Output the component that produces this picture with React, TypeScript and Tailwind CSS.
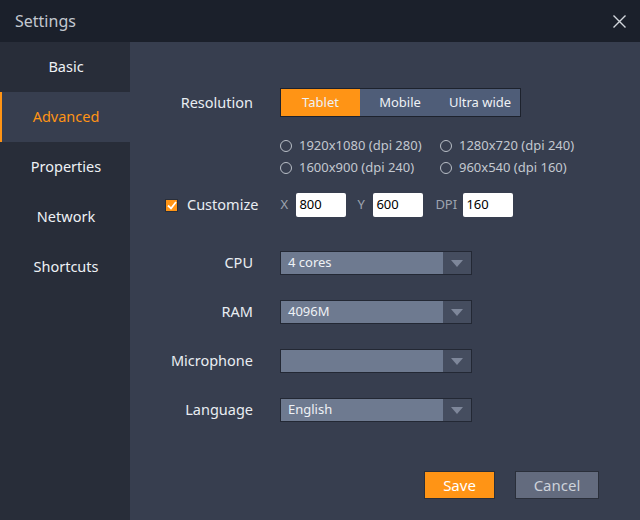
import { useState } from "react";

const tabs = ["Basic", "Advanced", "Properties", "Network", "Shortcuts"];
const modes = ["Tablet", "Mobile", "Ultra wide"];
const presets = [
  "1920x1080 (dpi 280)",
  "1280x720 (dpi 240)",
  "1600x900 (dpi 240)",
  "960x540 (dpi 160)",
];

function Select({ value }: { value: string }) {
  return (
    <div className="flex h-[24px] w-[192px] border border-[#232834] bg-[#6e7a90]">
      <div className="flex flex-1 items-center pl-[7px] text-[13px] text-[#eef1f5]">
        {value}
      </div>
      <div className="flex w-[28px] items-center justify-center bg-[#454d5f]">
        <svg width="12" height="7" viewBox="0 0 12 7">
          <path d="M0 0 H12 L6 7 Z" fill="#7e879a" />
        </svg>
      </div>
    </div>
  );
}

function Row({ label, children }: { label: string; children: React.ReactNode }) {
  return (
    <div className="flex items-center">
      <div className="w-[123px] text-right text-[14.5px] text-[#e9edf2]">{label}</div>
      <div className="ml-[27px]">{children}</div>
    </div>
  );
}

export default function App() {
  const [tab, setTab] = useState("Advanced");
  const [mode, setMode] = useState("Tablet");

  return (
    <div
      className="flex h-[520px] w-[640px] flex-col bg-[#373e4f]"
      style={{ fontFamily: '"Noto Sans", "Liberation Sans", sans-serif' }}
    >
      <div className="flex h-[42px] shrink-0 items-center justify-between bg-[#1b202b] pl-[15px] pr-[14px]">
        <span className="text-[16px] text-[#c3c8d0]">Settings</span>
        <svg width="13" height="13" viewBox="0 0 13 13">
          <path d="M0.5 0.5 L12.5 12.5 M12.5 0.5 L0.5 12.5" stroke="#d3d7dd" strokeWidth="1.4" />
        </svg>
      </div>

      <div className="flex flex-1">
        <div className="flex w-[130px] flex-col bg-[#282d39]">
          {tabs.map((t) => (
            <button
              key={t}
              onClick={() => setTab(t)}
              className={`flex h-[50px] items-center justify-center border-l-2 text-[14.5px] ${
                tab === t
                  ? "border-[#ff9415] bg-[#373e4f] text-[#ff9415]"
                  : "border-transparent text-[#eef1f5]"
              }`}
            >
              {t}
            </button>
          ))}
        </div>

        <div className="flex flex-1 flex-col">
          <div className="mt-[46px]">
            <Row label="Resolution">
              <div className="flex h-[29px] border border-[#1d222d]">
                {modes.map((m, i) => (
                  <button
                    key={m}
                    onClick={() => setMode(m)}
                    className={`text-[13px] text-[#eef1f5] ${i === 0 ? "w-[79px]" : "w-[80px]"} ${
                      mode === m ? "bg-[#ff9415]" : "bg-[#4f5d78]"
                    }`}
                  >
                    {m}
                  </button>
                ))}
              </div>
            </Row>
          </div>

          <div className="ml-[150px] mt-[18px] grid w-[320px] grid-cols-[160px_160px]">
            {presets.map((p) => (
              <div key={p} className="flex h-[22px] items-center gap-[7px] text-[13px] text-[#c3c8d0]">
                <span className="h-[12px] w-[12px] rounded-full border border-[#b9bec7]" />
                {p}
              </div>
            ))}
          </div>

          <div className="mt-[14px] flex h-[24px] items-center">
            <div className="ml-[35px] flex items-center gap-[9px]">
              <span className="flex h-[13px] w-[13px] items-center justify-center border border-[#2a2f3a] bg-[#ff9415]">
                <svg width="10" height="9" viewBox="0 0 10 9">
                  <path d="M1 4.5 L4 7.5 L9 1" stroke="#ffffff" strokeWidth="1.8" fill="none" />
                </svg>
              </span>
              <span className="text-[14.5px] text-[#e9edf2]">Customize</span>
            </div>
            <div className="ml-[22px] flex items-center text-[13px] text-[#9ea4b0]">
              <span className="w-[16px]">X</span>
              <span className="flex h-[24px] w-[50px] items-center rounded-[2px] bg-white pl-[3px] text-[13px] text-black">800</span>
              <span className="ml-[11px] w-[16px]">Y</span>
              <span className="flex h-[24px] w-[50px] items-center rounded-[2px] bg-white pl-[3px] text-[13px] text-black">600</span>
              <span className="ml-[12px] w-[28px]">DPI</span>
              <span className="flex h-[24px] w-[50px] items-center rounded-[2px] bg-white pl-[3px] text-[13px] text-black">160</span>
            </div>
          </div>

          <div className="mt-[34px] flex flex-col gap-[25px]">
            <Row label="CPU">
              <Select value="4 cores" />
            </Row>
            <Row label="RAM">
              <Select value="4096M" />
            </Row>
            <Row label="Microphone">
              <Select value="" />
            </Row>
            <Row label="Language">
              <Select value="English" />
            </Row>
          </div>

          <div className="mt-auto flex justify-end gap-[20px] pb-[21px] pr-[41px]">
            <button className="h-[28px] w-[71px] border border-[#2a2f3a] bg-[#ff9415] text-[15px] text-white">
              Save
            </button>
            <button className="h-[28px] w-[84px] border border-[#2a2f3a] bg-[#636b7e] text-[15px] text-[#cdd2da]">
              Cancel
            </button>
          </div>
        </div>
      </div>
    </div>
  );
}
